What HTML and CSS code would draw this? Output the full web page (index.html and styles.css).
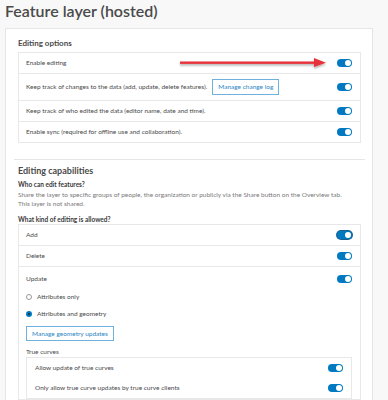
FILE: index.html
```html
<!DOCTYPE html>
<html lang="en">

<head>
    <meta charset="UTF-8">
    <meta name="viewport" content="width=device-width, initial-scale=1.0">
    <title>Feature layer (hosted)</title>
    <link rel="stylesheet" href="styles.css">
</head>

<body>

    <div class="page">
        <h1 class="titulo">Feature layer (hosted)</h1>

        <div class="card">
            <h3 class="secao">Editing options</h3>
            <div class="lista">
                <div class="linha">
                    <span>Enable editing</span>
                    <span class="toggle"></span>
                </div>
                <div class="linha alta">
                    <span class="texto-botao">
                        Keep track of changes to the data (add, update, delete features).
                        <button class="botao">Manage change log</button>
                    </span>
                    <span class="toggle"></span>
                </div>
                <div class="linha">
                    <span>Keep track of who edited the data (editor name, date and time).</span>
                    <span class="toggle"></span>
                </div>
                <div class="linha">
                    <span>Enable sync (required for offline use and collaboration).</span>
                    <span class="toggle"></span>
                </div>
            </div>

            <hr class="divisor">

            <h2 class="secao-grande">Editing capabilities</h2>
            <h4 class="pergunta">Who can edit features?</h4>
            <p class="descricao">Share the layer to specific groups of people, the organization or publicly via the Share button on the Overview tab.<br>This layer is not shared.</p>
            <h4 class="pergunta">What kind of editing is allowed?</h4>

            <div class="lista">
                <div class="linha">
                    <span>Add</span>
                    <span class="toggle foco"></span>
                </div>
                <div class="linha">
                    <span>Delete</span>
                    <span class="toggle"></span>
                </div>
                <div class="bloco">
                    <div class="linha sem-borda update">
                        <span>Update</span>
                        <span class="toggle"></span>
                    </div>
                    <label class="radio"><span class="bolinha"></span>Attributes only</label>
                    <label class="radio"><span class="bolinha marcada"></span>Attributes and geometry</label>
                    <button class="botao">Manage geometry updates</button>
                    <div class="rotulo">True curves</div>
                    <div class="lista interna">
                        <div class="linha sem-borda">
                            <span>Allow update of true curves</span>
                            <span class="toggle"></span>
                        </div>
                        <div class="linha sem-borda">
                            <span>Only allow true curve updates by true curve clients</span>
                            <span class="toggle"></span>
                        </div>
                    </div>
                </div>
            </div>
        </div>

        <!-- seta vermelha por cima -->
        <svg class="seta" width="150" height="14" viewBox="0 0 150 14">
            <defs>
                <filter id="sombra" x="-5%" y="-50%" width="110%" height="200%">
                    <feDropShadow dx="0" dy="1.5" stdDeviation="1" flood-color="#000" flood-opacity="0.35"/>
                </filter>
            </defs>
            <g filter="url(#sombra)">
                <rect x="2" y="5.5" width="138" height="2.4" fill="#e8333a"/>
                <path d="M136 2 L148 6.7 L136 11 Z" fill="#e8333a"/>
            </g>
        </svg>
    </div>

</body>

</html>
```

FILE: styles.css
```css
* {
    margin: 0;
    padding: 0;
    box-sizing: border-box;
    font-family: Lato, "Open Sans", sans-serif;
}

body {
    background-color: #f8f8f8;
    color: #4a4a4a;
    font-size: 6.5px;
}

.page {
    position: relative;
    padding-left: 5px;
    width: 388px;
    height: 400px;
    overflow: hidden;
}

.titulo {
    font-size: 16px;
    font-weight: 600;
    line-height: 20px;
    padding-top: 1px;
    color: #4a4a4a;
    margin-bottom: 7px;
}

.card {
    width: 368px;
    background-color: #fff;
    border: 1px solid #e6e6e6;
    padding: 9px 11px 0 12px;
}

.secao {
    font-size: 8px;
    font-weight: 700;
    line-height: 10px;
    margin-bottom: 4px;
    color: #4a4a4a;
}

.lista {
    border: 1px solid #e8e8e8;
}

.linha {
    display: flex;
    justify-content: space-between;
    align-items: center;
    padding: 6px 8px 6px 7px;
    min-height: 20px;
    border-bottom: 1px solid #e8e8e8;
    line-height: 8px;
}

.linha:last-child {
    border-bottom: none;
}

.alta {
    padding-top: 5px;
    padding-bottom: 5px;
}

.sem-borda {
    border-bottom: none;
}

.update {
    padding-top: 8px;
    padding-bottom: 5px;
}

.texto-botao {
    display: flex;
    align-items: center;
    gap: 5px;
}

.botao {
    background-color: #fff;
    color: #2b86c4;
    border: 1px solid #6fb0dc;
    font-size: 6.5px;
    height: 16px;
    padding: 0 5px;
    line-height: 14px;
}

.toggle {
    position: relative;
    display: inline-block;
    width: 15px;
    height: 8px;
    border-radius: 4px;
    background-color: #0079c1;
    flex-shrink: 0;
}

.toggle::after {
    content: "";
    position: absolute;
    right: 1px;
    top: 1px;
    width: 6px;
    height: 6px;
    border-radius: 50%;
    background-color: #fff;
}

.foco {
    box-shadow: 0 0 0 1px #1d5f8f;
}

.divisor {
    border: none;
    border-top: 1px solid #e6e6e6;
    margin: 16px -4px 0 -4px;
}

.secao-grande {
    font-size: 9px;
    font-weight: 700;
    line-height: 12px;
    margin-top: 5px;
    margin-bottom: 3px;
}

.pergunta {
    font-size: 6.5px;
    font-weight: 700;
    line-height: 9px;
    color: #3a3a3a;
}

.descricao {
    color: #7a7a7a;
    line-height: 9px;
    margin-top: 1px;
    margin-bottom: 7px;
}

.radio {
    display: flex;
    align-items: center;
    gap: 5px;
    padding: 4.5px 7px;
    line-height: 8px;
}

.bolinha {
    width: 6px;
    height: 6px;
    border-radius: 50%;
    border: 1px solid #9a9a9a;
}

.marcada {
    border: 2px solid #0079c1;
    background-color: #2a2a2a;
}

.bloco .botao {
    margin: 4px 0 0 7px;
    height: 15px;
}

.rotulo {
    padding: 7px 7px 1px 7px;
    line-height: 8px;
}

.interna {
    margin: 0 8px 0 7px;
}

.interna .linha {
    padding: 6px 8px 6px 8px;
}

.seta {
    position: absolute;
    left: 178px;
    top: 56px;
}
```
